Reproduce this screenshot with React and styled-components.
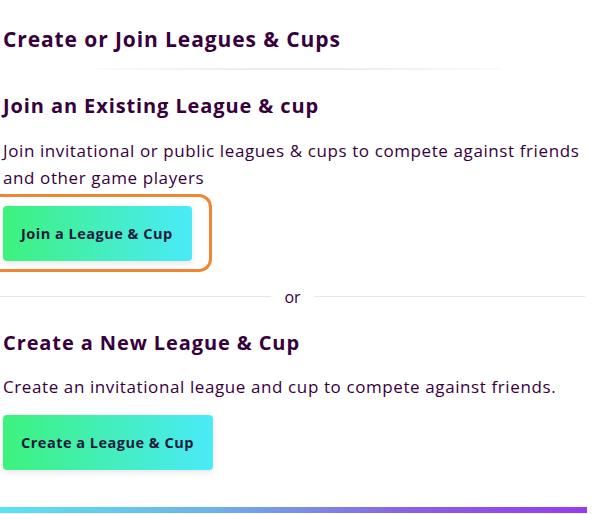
import React from "react"
import styled, { createGlobalStyle } from "styled-components"

const GlobalStyle = createGlobalStyle`
  html, body {
    margin: 0;
    padding: 0;
    background: #ffffff;
  }
  body {
    font-family: "Open Sans", "Noto Sans", sans-serif;
    color: #37003c;
  }
`

const Page = styled.div`
  width: 592px;
  height: 514px;
  overflow: hidden;
  display: flex;
  flex-direction: column;
`

const Content = styled.div`
  padding: 25px 7px 0 3px;
  display: flex;
  flex-direction: column;
`

const Title = styled.h2`
  margin: 0;
  font-size: 21px;
  line-height: 28px;
  font-weight: 700;
  letter-spacing: 0.9px;
  color: #37003c;
`

const TitleRule = styled.div`
  height: 2px;
  margin: 15px 0 0 92px;
  width: 405px;
  background: linear-gradient(
    to right,
    rgba(235, 232, 238, 0.2),
    #ecebef 40%,
    #ecebef 60%,
    rgba(235, 232, 238, 0.2)
  );
`

const Heading = styled.h3`
  margin: ${({ $top }) => $top}px 0 0;
  font-size: 20px;
  line-height: 26px;
  font-weight: 700;
  letter-spacing: 0.9px;
  color: #37003c;
`

const Text = styled.p`
  margin: ${({ $top }) => $top}px 0 0;
  font-size: 17px;
  line-height: 27px;
  font-weight: 400;
  letter-spacing: 0.6px;
  color: #37003c;
`

const ButtonWrap = styled.div`
  position: relative;
  align-self: flex-start;
  margin-top: 14.5px;

  ${({ $highlight }) =>
    $highlight &&
    `
    &::after {
      content: "";
      position: absolute;
      left: -24px;
      top: -12px;
      right: -20px;
      bottom: -11px;
      border: 3px solid #f08533;
      border-radius: 13px;
      pointer-events: none;
    }
  `}
`

const Button = styled.button`
  display: flex;
  align-items: center;
  justify-content: center;
  height: 55px;
  padding: 0 19px 0 18px;
  border: none;
  border-radius: 4px;
  background: linear-gradient(to right, #3df27c, #4aeaf9);
  box-shadow: 0 2px 6px rgba(55, 0, 60, 0.12);
  font-family: "Open Sans", "Noto Sans", sans-serif;
  font-size: 14.5px;
  font-weight: 700;
  letter-spacing: 0.5px;
  color: #1e1b3d;
  cursor: pointer;
`

const OrRow = styled.div`
  display: flex;
  align-items: center;
  gap: 13px;
  height: 20px;
  margin: 26px 0 0 -3px;
  width: 585px;
`

const OrLine = styled.div`
  flex: 1;
  height: 1px;
  background: #e9e7ec;
`

const OrText = styled.span`
  font-size: 16px;
  line-height: 20px;
  color: #37003c;
`

const BottomBar = styled.div`
  margin-top: 37px;
  width: 587px;
  height: 6px;
  background: linear-gradient(to right, #5ae4f2, #6cb4ea 35%, #8a60e2 70%, #963cef);
`

export default function App() {
  return (
    <Page>
      <GlobalStyle />
      <Content>
        <Title>Create or Join Leagues &amp; Cups</Title>
        <TitleRule />

        <Heading $top={23}>Join an Existing League &amp; cup</Heading>
        <Text $top={18}>
          Join invitational or public leagues &amp; cups to compete against friends
          and other game players
        </Text>
        <ButtonWrap $highlight>
          <Button>Join a League &amp; Cup</Button>
        </ButtonWrap>

        <OrRow>
          <OrLine />
          <OrText>or</OrText>
          <OrLine />
        </OrRow>

        <Heading $top={23}>Create a New League &amp; Cup</Heading>
        <Text $top={17.5}>
          Create an invitational league and cup to compete against friends.
        </Text>
        <ButtonWrap>
          <Button>Create a League &amp; Cup</Button>
        </ButtonWrap>
      </Content>
      <BottomBar />
    </Page>
  )
}
